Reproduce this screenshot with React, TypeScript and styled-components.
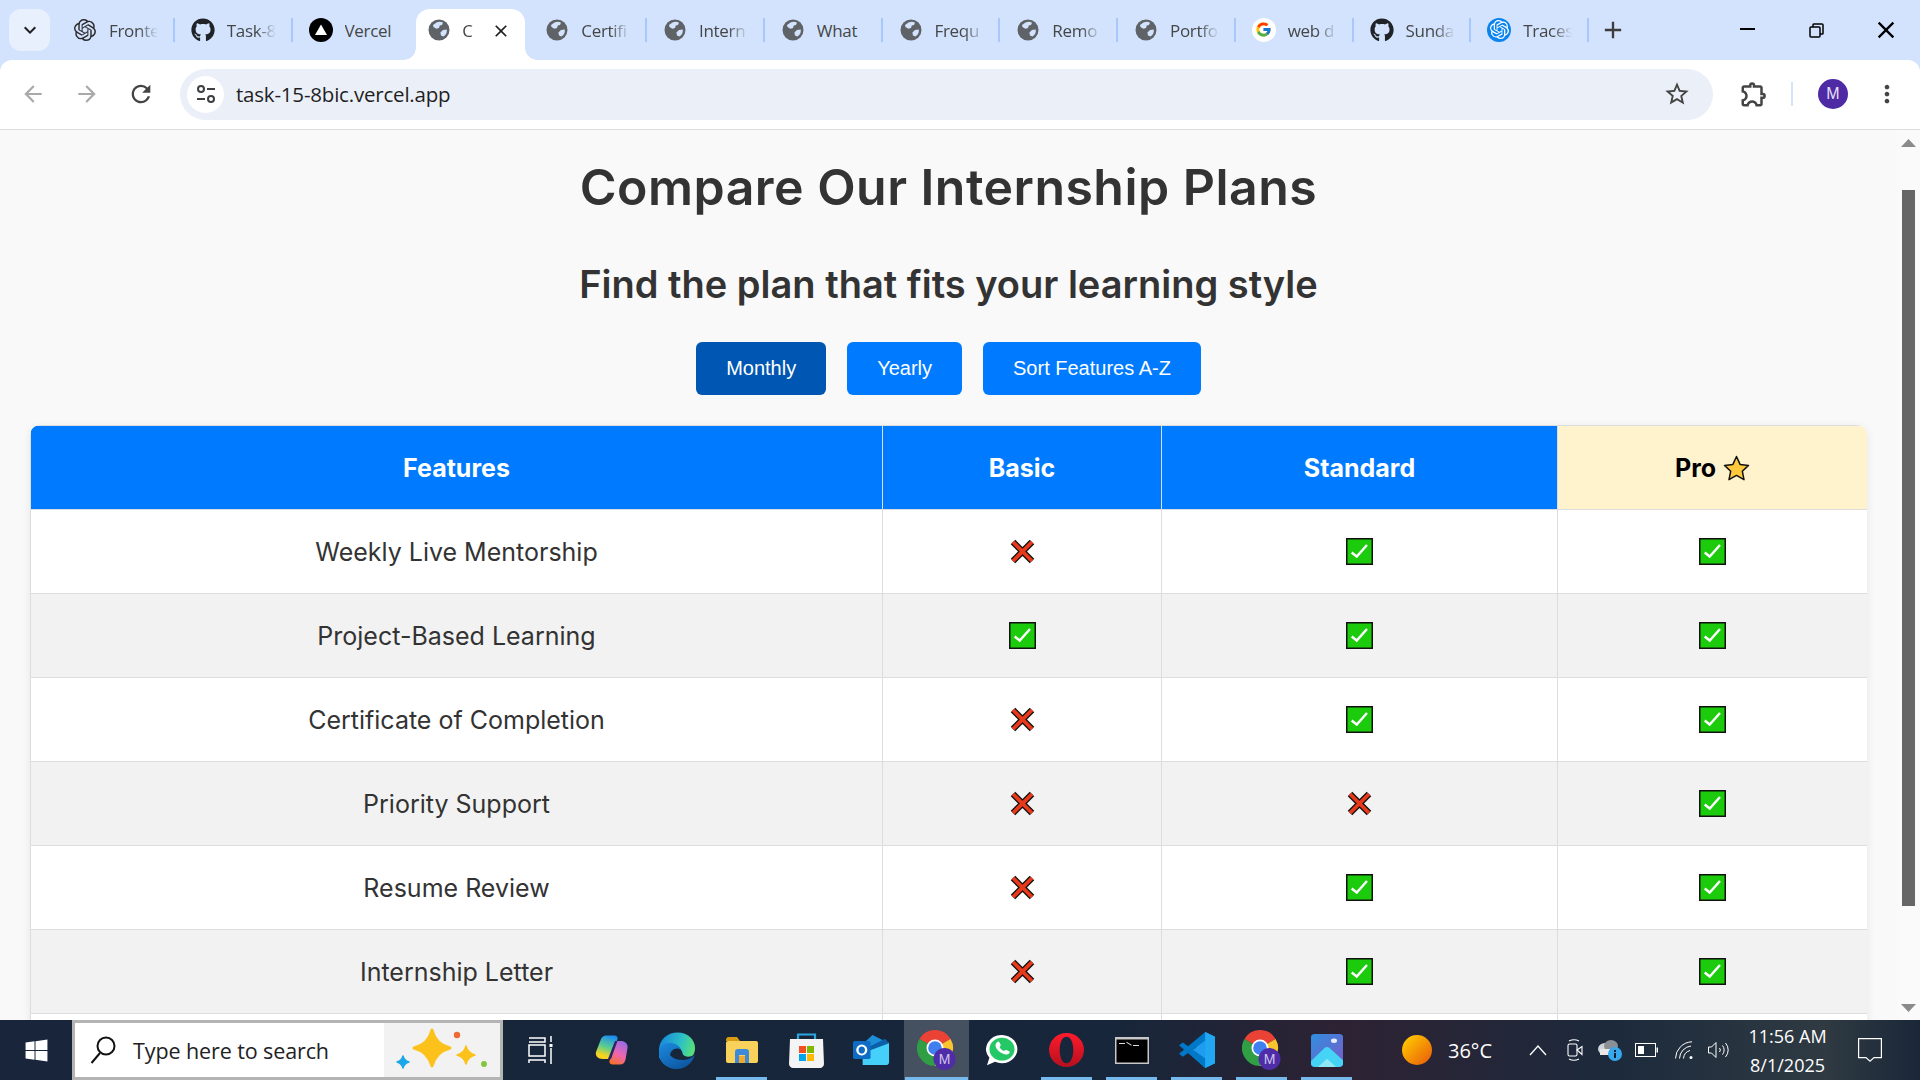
import React from "react";
import styled, { createGlobalStyle } from "styled-components";
import { FaGithub, FaWindows } from "react-icons/fa";
import { FcGoogle } from "react-icons/fc";
import { SiOpenai } from "react-icons/si";
import {
  MdAdd,
  MdArrowBack,
  MdArrowForward,
  MdClose,
  MdKeyboardArrowDown,
  MdMoreVert,
  MdOutlineExtension,
  MdRefresh,
  MdStarBorder,
} from "react-icons/md";

const GlobalStyle = createGlobalStyle`
  html, body {
    margin: 0;
    padding: 0;
    overflow: hidden;
    background: #d3e3fd;
  }
  * { box-sizing: border-box; }
`;

type TabInfo = {
  title: string;
  icon: "openai" | "github" | "vercel" | "globe" | "google" | "traces";
  solid?: boolean;
  noSep?: boolean;
  active?: boolean;
};

const TABS: TabInfo[] = [
  { title: "Fronte", icon: "openai" },
  { title: "Task-8", icon: "github" },
  { title: "Vercel", icon: "vercel", noSep: true, solid: true },
  { title: "C", icon: "globe", active: true, noSep: true },
  { title: "Certifi", icon: "globe" },
  { title: "Intern", icon: "globe" },
  { title: "What", icon: "globe", solid: true },
  { title: "Frequ", icon: "globe" },
  { title: "Remo", icon: "globe" },
  { title: "Portfo", icon: "globe" },
  { title: "web d", icon: "google" },
  { title: "Sunda", icon: "github" },
  { title: "Traces", icon: "traces" },
];

const ROWS: [string, boolean, boolean, boolean][] = [
  ["Weekly Live Mentorship", false, true, true],
  ["Project-Based Learning", true, true, true],
  ["Certificate of Completion", false, true, true],
  ["Priority Support", false, false, true],
  ["Resume Review", false, true, true],
  ["Internship Letter", false, true, true],
];

function GlobeIcon() {
  return (
    <svg width="22" height="22" viewBox="0 0 22 22">
      <circle cx="11" cy="11" r="10.5" fill="#5f6368" />
      <path d="M8.5 3.5c2-1 5-1 6.5.2l-1 2.3-2.2.6-.8 2.4-2.7.8L5.5 8 5 6z" fill="#d3e3fd" />
      <path d="M15 11l3.8-.6c.4 3-1 5.6-3.4 7.2l-2.4-1.2-.6-3z" fill="#d3e3fd" />
    </svg>
  );
}

function TabIcon({ kind }: { kind: TabInfo["icon"] }) {
  if (kind === "openai") return <SiOpenai size={22} color="#2b2b2b" />;
  if (kind === "github") return <FaGithub size={24} color="#1f2328" />;
  if (kind === "globe") return <GlobeIcon />;
  if (kind === "google") return <GoogleBadge><FcGoogle size={17} /></GoogleBadge>;
  if (kind === "vercel")
    return (
      <svg width="24" height="24" viewBox="0 0 24 24">
        <circle cx="12" cy="12" r="12" fill="#000" />
        <path d="M12 6.5l6 10.5H6z" fill="#fff" />
      </svg>
    );
  return <TracesBadge><SiOpenai size={19} color="#fff" /></TracesBadge>;
}

function TuneIcon() {
  return (
    <svg width="22" height="22" viewBox="0 0 22 22" fill="none" stroke="#3c4043" strokeWidth="2">
      <circle cx="6" cy="6" r="3" />
      <path d="M12 6h8M2 16h8" />
      <circle cx="16" cy="16" r="3" />
    </svg>
  );
}

function CheckIcon() {
  return (
    <svg width="27" height="27" viewBox="0 0 27 27">
      <rect x="0.75" y="0.75" width="25.5" height="25.5" fill="#1ccb0b" stroke="#111" strokeWidth="1.5" />
      <path d="M5.7 14.5l5 4L21 7" fill="none" stroke="#fff" strokeWidth="2.4" />
    </svg>
  );
}

function CrossIcon() {
  return (
    <svg width="27" height="27" viewBox="0 0 27 27">
      <path d="M4 4l19 19M23 4L4 23" stroke="#111" strokeWidth="6.4" />
      <path d="M4 4l19 19M23 4L4 23" stroke="#e8391a" strokeWidth="3.8" />
    </svg>
  );
}

function HeaderStar() {
  return (
    <svg width="27" height="26" viewBox="0 0 27 26">
      <path
        d="M13.5 1.5l3.6 7.9 8.4 1-6.2 5.8 1.7 8.5-7.5-4.3L6 24.7l1.7-8.5L1.5 10.4l8.4-1z"
        fill="#ffc83d"
        stroke="#111"
        strokeWidth="1.5"
        strokeLinejoin="round"
      />
    </svg>
  );
}

const sparkle = (cx: number, cy: number, r: number) =>
  `M${cx} ${cy - r}Q${cx + r * 0.2} ${cy - r * 0.2} ${cx + r} ${cy}Q${cx + r * 0.2} ${cy + r * 0.2} ${cx} ${cy + r}Q${cx - r * 0.2} ${cy + r * 0.2} ${cx - r} ${cy}Q${cx - r * 0.2} ${cy - r * 0.2} ${cx} ${cy - r}Z`;

function Sparkles() {
  return (
    <svg width="116" height="54" viewBox="0 0 116 54">
      <path d={sparkle(48, 25, 18)} fill="#fcc21b" stroke="#fcc21b" strokeWidth="3" strokeLinejoin="round" />
      <path d={sparkle(82, 32, 9)} fill="#fcc21b" stroke="#fcc21b" strokeWidth="1.5" strokeLinejoin="round" />
      <path d={sparkle(19, 39, 6)} fill="#1aa7e8" stroke="#1aa7e8" strokeWidth="1.5" strokeLinejoin="round" />
      <circle cx="73" cy="12" r="3.2" fill="#ef6a33" />
      <circle cx="100" cy="41" r="3" fill="#86c440" />
    </svg>
  );
}

function SearchGlass() {
  return (
    <svg width="26" height="30" viewBox="0 0 26 30" fill="none" stroke="#111" strokeWidth="2">
      <circle cx="16" cy="11" r="8.5" />
      <path d="M10 18L1.5 28" />
    </svg>
  );
}

function TaskView() {
  return (
    <svg width="26" height="30" viewBox="0 0 26 30" fill="none" stroke="#fff" strokeWidth="1.5">
      <path d="M1 3h16v4H1M1 10h16v11H1zM1 28v-3h16v3M23 1v6M23 13v16" />
      <rect x="21.5" y="9" width="3" height="3" fill="#fff" stroke="none" />
    </svg>
  );
}

function Copilot() {
  return (
    <svg width="33" height="30" viewBox="0 0 33 30">
      <defs>
        <linearGradient id="cpA" x1="0.6" y1="0" x2="0.3" y2="1">
          <stop offset="0" stopColor="#1d8ff0" />
          <stop offset="0.5" stopColor="#5fcf8a" />
          <stop offset="0.85" stopColor="#f7d31f" />
        </linearGradient>
        <linearGradient id="cpB" x1="0.7" y1="0" x2="0.3" y2="1">
          <stop offset="0" stopColor="#9a6be8" />
          <stop offset="0.55" stopColor="#ee66b0" />
          <stop offset="1" stopColor="#f4702f" />
        </linearGradient>
      </defs>
      <path d="M11 .5h8c2.500 0 4 1.500 3.500 3.500L16 24H7.500C3 24 0 21 1 17L6 4C7 2 9 .5 11 .5z" fill="url(#cpA)" />
      <path d="M26 6h-5l-6.500 20c-.6 2 1 3.500 3 3.500H25c3 0 5-2 5.500-5L32.500 13c.7-4-2.500-7-6.500-7z" fill="url(#cpB)" />
      <path d="M20 6h2.500L16 24h-3z" fill="#2a2466" />
    </svg>
  );
}

function Edge() {
  return (
    <svg width="38" height="37" viewBox="0 0 38 37">
      <defs>
        <linearGradient id="edA" x1="0.1" y1="0.3" x2="1" y2="0.5">
          <stop offset="0" stopColor="#1b8fd8" />
          <stop offset="0.55" stopColor="#2bbfc8" />
          <stop offset="1" stopColor="#58e07a" />
        </linearGradient>
        <linearGradient id="edB" x1="0" y1="0" x2="0.7" y2="1">
          <stop offset="0" stopColor="#1c8be0" />
          <stop offset="1" stopColor="#0d55a0" />
        </linearGradient>
      </defs>
      <path d="M1 18C1 8 9 .5 19.500.5 30 .5 37 8 37 16c0 5-2 8-5 10H1z" fill="url(#edA)" />
      <path d="M1 20C2 13 8 10 14 11c5 .8 9 4 10 9 1 4 4 6 8 5.500 2-.3 4-1.500 5-3.500-2 9-10 15-18 15C9 37 0 30 1 20z" fill="url(#edB)" />
      <path d="M12 23c.5-4 4-7 8-6.500 3 .4 4.500 3 4.500 5.500 2 3.500 8 3.500 12 .8C34 26 30 28 26 28c-6 0-11-1-14-5z" fill="#17263a" />
    </svg>
  );
}

function FolderIcon() {
  return (
    <svg width="32" height="26" viewBox="0 0 32 26">
      <path d="M0 3c0-2 1-3 3-3h8l3 4H0z" fill="#d89b12" />
      <rect y="4" width="32" height="22" rx="2" fill="#f9d25c" />
      <path d="M9 26V15c0-2 1-3 3-3h8c2 0 3 1 3 3v11h-4v-8h-6v8z" fill="#3c8ad8" />
      <rect x="13" y="19" width="6" height="7" fill="#f0a92b" />
    </svg>
  );
}

function StoreIcon() {
  return (
    <svg width="35" height="35" viewBox="0 0 35 35">
      <path d="M9 6V1.500h17V6" fill="none" stroke="#2aa6e0" strokeWidth="2.2" />
      <path d="M1 6h33l1 25c0 2-2 4-4 4H4c-2 0-4-2-4-4z" fill="#f4f4f4" />
      <rect x="10" y="13" width="7" height="7" fill="#f25022" />
      <rect x="18" y="13" width="7" height="7" fill="#7fba00" />
      <rect x="10" y="21" width="7" height="7" fill="#00a4ef" />
      <rect x="18" y="21" width="7" height="7" fill="#ffb900" />
    </svg>
  );
}

function OutlookIcon() {
  return (
    <svg width="37" height="30" viewBox="0 0 38 40" preserveAspectRatio="none">
      <path d="M20 0l17 11v25c0 2-1 4-3 4H10V12z" fill="#1d8fd8" />
      <path d="M10 40V24l27-14v26c0 2-1 4-3 4z" fill="#44d0f8" />
      <path d="M10 20L33 5l4 6-27 13z" fill="#0c5fa8" />
      <rect y="8" width="18" height="24" rx="2" fill="#0f6cc4" />
      <ellipse cx="9" cy="20" rx="4.5" ry="6" fill="none" stroke="#fff" strokeWidth="2.4" />
    </svg>
  );
}

function ChromeBadge() {
  return (
    <svg width="40" height="40" viewBox="0 0 40 40">
      <path d="M18 18L2.400 9A18 18 0 0 1 33.600 9z" fill="#ea4335" />
      <path d="M18 18L33.600 9A18 18 0 0 1 18 36z" fill="#f9c52e" />
      <path d="M18 18L18 36A18 18 0 0 1 2.400 9z" fill="#2f9e44" />
      <circle cx="18" cy="18" r="8.500" fill="#fff" />
      <circle cx="18" cy="18" r="6.800" fill="#3f7ff0" />
      <circle cx="27.500" cy="29" r="11" fill="#4f2ca8" />
      <text x="27.500" y="34" textAnchor="middle" fontFamily="Liberation Sans, sans-serif" fontSize="14" fill="#cfc4ea">
        M
      </text>
    </svg>
  );
}

function WhatsAppIcon() {
  return (
    <svg width="32" height="33" viewBox="0 0 32 36" preserveAspectRatio="none">
      <path d="M16 1a15.500 15.500 0 1 1-7 29.400L1 34l2.400-8A15.500 15.500 0 0 1 16 1z" fill="#fff" />
      <circle cx="16" cy="16.5" r="12.5" fill="#25c866" />
      <path d="M11 9c1-1 2-1 2.400 0l1.200 2.800c.3.700 0 1.200-1 2.300.8 2 2.400 3.600 4.400 4.400 1-1 1.600-1.300 2.300-1l2.800 1.300c1 .4.800 1.500 0 2.400-1.500 1.600-4 1.400-6.500.2-3.500-1.600-6.300-4.600-7-8-.3-1.700.6-3.300 1.400-4.400z" fill="#fff" />
    </svg>
  );
}

function OperaIcon() {
  return (
    <svg width="35" height="34" viewBox="0 0 36 36" preserveAspectRatio="none">
      <defs>
        <linearGradient id="opA" x1="0" y1="0" x2="0" y2="1">
          <stop offset="0" stopColor="#ff1b2d" />
          <stop offset="1" stopColor="#b5101e" />
        </linearGradient>
      </defs>
      <path
        fillRule="evenodd"
        d="M18 0a18 18 0 1 0 0 36a18 18 0 1 0 0-36zM18 4c4.500 0 7 6.500 7 14s-2.500 14-7 14-7-6.500-7-14 2.500-14 7-14z"
        fill="url(#opA)"
      />
    </svg>
  );
}

function TerminalIcon() {
  return (
    <svg width="34" height="27" viewBox="0 0 34 27">
      <rect width="34" height="27" fill="#c8c8c8" />
      <rect x="1.500" y="2.500" width="31" height="23" fill="#000" />
      <path d="M4 6h6v1H4zM12 5l5 3-1 .5-5-3zM18 8h6v1h-6z" fill="#ddd" />
    </svg>
  );
}

function VsCodeIcon() {
  return (
    <svg width="37" height="36" viewBox="0 0 38 38" preserveAspectRatio="none">
      <path d="M28 0l10 5v28l-10 5L10 21l8-4z" fill="#1f9cf0" />
      <path d="M28 0v38L1 14l4-3 23 17V9L5 26l-4-3z" fill="#0078c8" />
      <path d="M28 0l10 5v28l-10 5z" fill="#22a7f2" />
    </svg>
  );
}

function PhotosIcon() {
  return (
    <svg width="32" height="33" viewBox="0 0 32 44" preserveAspectRatio="none">
      <defs>
        <linearGradient id="phA" x1="0" y1="0" x2="1" y2="1">
          <stop offset="0" stopColor="#2f8fe0" />
          <stop offset="1" stopColor="#7a5ac8" />
        </linearGradient>
      </defs>
      <rect width="32" height="44" rx="4" fill="url(#phA)" />
      <circle cx="23" cy="9" r="3" fill="#e8eef8" />
      <path d="M0 36l14-18c1-1 3-1 4 0l14 17v5c0 2-2 4-4 4H4c-2 0-4-2-4-4z" fill="#45d4f5" />
      <path d="M7 44l9-11 9 11z" fill="#8feaf8" />
    </svg>
  );
}

function SunIcon() {
  return (
    <svg width="30" height="30" viewBox="0 0 30 30">
      <defs>
        <linearGradient id="snA" x1="0" y1="0" x2="1" y2="1">
          <stop offset="0.1" stopColor="#ffc800" />
          <stop offset="1" stopColor="#e8560a" />
        </linearGradient>
      </defs>
      <circle cx="15" cy="15" r="15" fill="url(#snA)" />
    </svg>
  );
}

function ChevronTray() {
  return (
    <svg width="18" height="12" viewBox="0 0 18 12" fill="none" stroke="#fff" strokeWidth="1.3">
      <path d="M1 11l8-9 8 9" />
    </svg>
  );
}

function MeetIcon() {
  return (
    <svg width="16" height="22" viewBox="0 0 16 22" fill="none" stroke="#fff" strokeWidth="1.1">
      <rect x="1" y="5" width="9" height="12" rx="1.5" />
      <path d="M10 11l5-3.500v8z" />
      <path d="M2 2c3-1.500 7-1.500 10 0M2 20c3 1.500 7 1.500 10 0" />
    </svg>
  );
}

function CloudInfo() {
  return (
    <svg width="24" height="22" viewBox="0 0 24 22">
      <ellipse cx="7" cy="10" rx="7" ry="6" fill="#d0d4d8" />
      <ellipse cx="13" cy="7" rx="7" ry="6" fill="#8a9096" />
      <rect x="2" y="10" width="14" height="6" fill="#e8e8e8" />
      <circle cx="17" cy="15" r="7" fill="#37a8ec" />
      <rect x="16" y="14" width="2" height="5" fill="#10202e" />
      <rect x="16" y="11" width="2" height="2" fill="#10202e" />
    </svg>
  );
}

function BatteryIcon() {
  return (
    <svg width="23" height="14" viewBox="0 0 23 14">
      <rect x="0.5" y="0.5" width="20" height="13" fill="none" stroke="#fff" />
      <rect x="3" y="3" width="6" height="8" fill="#fff" />
      <rect x="21.5" y="4.5" width="1.5" height="5" fill="#fff" />
    </svg>
  );
}

function WifiIcon() {
  return (
    <svg width="18" height="18" viewBox="0 0 18 18" fill="none" stroke="#fff" strokeWidth="1">
      <path d="M.5 17.500A17 17 0 0 1 17 .8M4.500 17.500A13 13 0 0 1 16 5M8.500 17.500A9 9 0 0 1 15 9.500" />
      <circle cx="16" cy="16.5" r="1.5" fill="#fff" stroke="none" />
    </svg>
  );
}

function SpeakerIcon() {
  return (
    <svg width="21" height="18" viewBox="0 0 21 18" fill="none" stroke="#fff" strokeWidth="1">
      <path d="M.5 6h3L8 1.500v15L3.500 12h-3z" />
      <path d="M11.500 7a3 3 0 0 1 0 4M14.500 4.500a7 7 0 0 1 0 9M17.500 2a10.500 10.500 0 0 1 0 14" />
    </svg>
  );
}

function NoticeIcon() {
  return (
    <svg width="24" height="24" viewBox="0 0 24 24" fill="none" stroke="#fff" strokeWidth="1.2">
      <path d="M.6.6h22.800v19H16l-4 3.600-4-3.600H.6z" />
    </svg>
  );
}

function RestoreIcon() {
  return (
    <svg width="15" height="15" viewBox="0 0 15 15" fill="none" stroke="#000" strokeWidth="1.5">
      <rect x="1" y="4" width="10" height="10" rx="1" />
      <path d="M4 4V1.800C4 1.300 4.300 1 4.800 1H13c.6 0 1 .4 1 1v8.200c0 .5-.3.800-.8.800H11" />
    </svg>
  );
}

function ScrollArrow({ down }: { down?: boolean }) {
  return (
    <svg width="15" height="8" viewBox="0 0 15 8">
      <path d={down ? "M0 0h15L7.500 8z" : "M0 8h15L7.500 0z"} fill="#8a8a8a" />
    </svg>
  );
}

export default function App() {
  return (
    <>
      <GlobalStyle />
      <Screen>
        <TabStrip>
          <TabMenu>
            <MdKeyboardArrowDown size={24} color="#1f1f1f" />
          </TabMenu>
          <TabList>
            {TABS.map((tab) => (
              <Tab key={tab.title} $active={tab.active}>
                <TabFavicon>
                  <TabIcon kind={tab.icon} />
                </TabFavicon>
                <TabTitle $active={tab.active} $solid={tab.solid}>{tab.title}</TabTitle>
                {tab.active && (
                  <TabClose>
                    <MdClose size={20} color="#1f1f1f" />
                  </TabClose>
                )}
                {!tab.noSep && <TabSeparator />}
              </Tab>
            ))}
          </TabList>
          <NewTab>
            <MdAdd size={28} color="#3c3c3c" />
          </NewTab>
          <WindowControls>
            <WindowButton>
              <MinimizeBar />
            </WindowButton>
            <WindowButton>
              <RestoreIcon />
            </WindowButton>
            <WindowButton>
              <MdClose size={28} color="#000" />
            </WindowButton>
          </WindowControls>
        </TabStrip>

        <Toolbar>
          <NavButton $dim>
            <MdArrowBack size={26} />
          </NavButton>
          <NavButton $dim>
            <MdArrowForward size={26} />
          </NavButton>
          <NavButton>
            <MdRefresh size={28} />
          </NavButton>
          <AddressBar>
            <SiteInfo>
              <TuneIcon />
            </SiteInfo>
            <AddressText>task-15-8bic.vercel.app</AddressText>
            <MdStarBorder size={28} color="#444" />
          </AddressBar>
          <ExtensionSlot>
            <MdOutlineExtension size={30} color="#444" />
          </ExtensionSlot>
          <ToolbarDivider />
          <Avatar>M</Avatar>
          <MenuSlot>
            <MdMoreVert size={28} color="#444" />
          </MenuSlot>
        </Toolbar>

        <Viewport>
          <Page>
            <Title>Compare Our Internship Plans</Title>
            <Subtitle>Find the plan that fits your learning style</Subtitle>
            <ButtonRow>
              <PlanButton $active>Monthly</PlanButton>
              <PlanButton>Yearly</PlanButton>
              <PlanButton>Sort Features A-Z</PlanButton>
            </ButtonRow>
            <TableCard>
              <PlanTable>
                <colgroup>
                  <col style={{ width: 852 }} />
                  <col style={{ width: 279 }} />
                  <col style={{ width: 396 }} />
                  <col style={{ width: 310 }} />
                </colgroup>
                <thead>
                  <tr>
                    <HeadCell>Features</HeadCell>
                    <HeadCell>Basic</HeadCell>
                    <HeadCell>Standard</HeadCell>
                    <HeadCell $pro>
                      <ProLabel>
                        Pro <HeaderStar />
                      </ProLabel>
                    </HeadCell>
                  </tr>
                </thead>
                <tbody>
                  {ROWS.map(([name, basic, standard, pro]) => (
                    <Row key={name}>
                      <BodyCell>{name}</BodyCell>
                      {[basic, standard, pro].map((has, i) => (
                        <BodyCell key={i}>
                          <MarkWrap>{has ? <CheckIcon /> : <CrossIcon />}</MarkWrap>
                        </BodyCell>
                      ))}
                    </Row>
                  ))}
                  <Row>
                    <BodyCell />
                    <BodyCell />
                    <BodyCell />
                    <BodyCell />
                  </Row>
                </tbody>
              </PlanTable>
            </TableCard>
          </Page>
          <ScrollTrack>
            <ScrollArrow />
            <ScrollThumb />
            <ScrollArrow down />
          </ScrollTrack>
        </Viewport>

        <Taskbar>
          <StartSlot>
            <FaWindows size={25} color="#fff" />
          </StartSlot>
          <SearchBox>
            <SearchIconWrap>
              <SearchGlass />
            </SearchIconWrap>
            <SearchText>Type here to search</SearchText>
            <SparkleArea>
              <Sparkles />
            </SparkleArea>
          </SearchBox>
          <TaskViewSlot>
            <TaskView />
          </TaskViewSlot>
          <AppSlot><Copilot /></AppSlot>
          <AppSlot><Edge /></AppSlot>
          <AppSlot $open><FolderIcon /></AppSlot>
          <AppSlot><StoreIcon /></AppSlot>
          <AppSlot><OutlookIcon /></AppSlot>
          <AppSlot $open $focused><ChromeBadge /></AppSlot>
          <AppSlot><WhatsAppIcon /></AppSlot>
          <AppSlot $open><OperaIcon /></AppSlot>
          <AppSlot $open><TerminalIcon /></AppSlot>
          <AppSlot $open><VsCodeIcon /></AppSlot>
          <AppSlot $open><ChromeBadge /></AppSlot>
          <AppSlot $open><PhotosIcon /></AppSlot>

          <TrayItem $ml={43}><SunIcon /></TrayItem>
          <Temperature>36°C</Temperature>
          <TrayItem $ml={37}><ChevronTray /></TrayItem>
          <TrayItem $ml={20}><MeetIcon /></TrayItem>
          <TrayItem $ml={15}><CloudInfo /></TrayItem>
          <TrayItem $ml={13}><BatteryIcon /></TrayItem>
          <TrayItem $ml={17}><WifiIcon /></TrayItem>
          <TrayItem $ml={15}><SpeakerIcon /></TrayItem>
          <Clock>
            <span>11:56 AM</span>
            <span>8/1/2025</span>
          </Clock>
          <TrayItem $ml={28}><NoticeIcon /></TrayItem>
        </Taskbar>
      </Screen>
    </>
  );
}

const Screen = styled.div`
  width: 1920px;
  height: 1080px;
  display: flex;
  flex-direction: column;
  overflow: hidden;
  background: #d3e3fd;
`;

const TabStrip = styled.div`
  height: 60px;
  flex: none;
  display: flex;
  padding-left: 9px;
`;

const TabMenu = styled.div`
  width: 41px;
  height: 42px;
  margin: 9px 7px 0 0;
  border-radius: 12px;
  background: #e9f0fd;
  display: flex;
  align-items: center;
  justify-content: center;
`;

const TabList = styled.div`
  display: flex;
  width: 1532px;
  flex: none;
`;

const Tab = styled.div<{ $active?: boolean }>`
  position: relative;
  flex: 1 1 0;
  min-width: 0;
  display: flex;
  align-items: center;
  padding-left: 16px;
  height: 60px;
  ${({ $active }) =>
    $active &&
    `
    flex: none;
    width: 109px;
    height: 51px;
    margin: 9px 4px 0 6px;
    padding: 0 0 8px 11px;
    background: #fff;
    border-radius: 14px 14px 0 0;
    &::before, &::after {
      content: "";
      position: absolute;
      bottom: 0;
      width: 12px;
      height: 12px;
    }
    &::before { left: -12px; background: radial-gradient(circle at 0 0, transparent 11.5px, #fff 12px); }
    &::after { right: -12px; background: radial-gradient(circle at 100% 0, transparent 11.5px, #fff 12px); }
  `}
`;

const TabFavicon = styled.div`
  width: 24px;
  height: 24px;
  flex: none;
  display: flex;
  align-items: center;
  justify-content: center;
  margin-top: -1px;
`;

const TabTitle = styled.div<{ $active?: boolean; $solid?: boolean }>`
  margin-left: ${({ $active }) => ($active ? "11px" : "12px")};
  width: ${({ $active }) => ($active ? "14px" : "49px")};
  overflow: hidden;
  white-space: nowrap;
  font: 17px "Open Sans", sans-serif;
  letter-spacing: -0.3px;
  color: #444746;
  ${({ $solid }) => !$solid && "mask-image: linear-gradient(90deg, #000 60%, transparent 100%);"}
`;

const TabClose = styled.div`
  margin-left: 15px;
  display: flex;
`;

const TabSeparator = styled.div`
  position: absolute;
  right: 0;
  top: 18px;
  width: 2px;
  height: 24px;
  background: #a8c7fa;
`;

const GoogleBadge = styled.div`
  width: 24px;
  height: 24px;
  border-radius: 50%;
  background: #fff;
  display: flex;
  align-items: center;
  justify-content: center;
`;

const TracesBadge = styled.div`
  width: 24px;
  height: 24px;
  border-radius: 50%;
  background: #0a84ee;
  display: flex;
  align-items: center;
  justify-content: center;
`;

const NewTab = styled.div`
  width: 48px;
  height: 60px;
  display: flex;
  align-items: center;
  justify-content: center;
`;

const WindowControls = styled.div`
  margin-left: auto;
  display: flex;
`;

const WindowButton = styled.div`
  width: 69px;
  height: 60px;
  display: flex;
  align-items: center;
  justify-content: center;
`;

const MinimizeBar = styled.div`
  width: 15px;
  height: 2px;
  margin-top: -2px;
  background: #000;
`;

const Toolbar = styled.div`
  height: 70px;
  flex: none;
  display: flex;
  align-items: center;
  padding: 0 0 1px 6px;
  background: #fff;
  border-radius: 12px 12px 0 0;
  border-bottom: 1px solid #dedede;
`;

const NavButton = styled.div<{ $dim?: boolean }>`
  width: 54px;
  display: flex;
  justify-content: center;
  color: ${({ $dim }) => ($dim ? "#a9a9a9" : "#444")};
`;

const AddressBar = styled.div`
  width: 1533px;
  height: 51px;
  margin-left: 12px;
  padding: 0 22px 0 7px;
  display: flex;
  align-items: center;
  border-radius: 26px;
  background: #ebeff8;
`;

const SiteInfo = styled.div`
  width: 37px;
  height: 37px;
  border-radius: 50%;
  background: #fff;
  display: flex;
  align-items: center;
  justify-content: center;
`;

const AddressText = styled.div`
  flex: 1;
  margin-left: 12px;
  font: 20.5px "Open Sans", sans-serif;
  letter-spacing: -0.2px;
  color: #1f1f1f;
`;

const ExtensionSlot = styled.div`
  margin-left: 26px;
  display: flex;
`;

const ToolbarDivider = styled.div`
  width: 2px;
  height: 24px;
  margin-left: 22px;
  background: #d3e3fd;
`;

const Avatar = styled.div`
  width: 30px;
  height: 30px;
  margin-left: 25px;
  border-radius: 50%;
  background: #4e2aa5;
  color: #e8e0f8;
  font: 16px "Liberation Sans", sans-serif;
  display: flex;
  align-items: center;
  justify-content: center;
`;

const MenuSlot = styled.div`
  margin-left: 25px;
  display: flex;
`;

const Viewport = styled.div`
  flex: 1;
  min-height: 0;
  display: flex;
  overflow: hidden;
  background: #f9f9f9;
`;

const Page = styled.main`
  width: 1897px;
  flex: none;
  padding: 21px 30px 0;
  font-family: Inter, sans-serif;
  color: #333;
`;

const Title = styled.h1`
  margin: 0;
  text-align: center;
  font-size: 50px;
  line-height: 72px;
  font-weight: 600;
  letter-spacing: 0.47px;
`;

const Subtitle = styled.h2`
  margin: 34px 0 0;
  text-align: center;
  font-size: 38px;
  line-height: 54px;
  font-weight: 600;
`;

const ButtonRow = styled.div`
  margin-top: 31px;
  display: flex;
  justify-content: center;
  gap: 21px;
`;

const PlanButton = styled.button<{ $active?: boolean }>`
  height: 53px;
  padding: 0 30px;
  border: none;
  border-radius: 6px;
  background: ${({ $active }) => ($active ? "#0056b3" : "#007bff")};
  color: #fff;
  font: 20px "Liberation Sans", sans-serif;
`;

const TableCard = styled.div`
  margin-top: 30px;
  width: 1837px;
  border-radius: 10px;
  overflow: hidden;
  box-shadow: 0 2px 10px rgba(0, 0, 0, 0.08);
`;

const PlanTable = styled.table`
  width: 1837px;
  table-layout: fixed;
  border-collapse: collapse;
  background: #fff;
`;

const HeadCell = styled.th<{ $pro?: boolean }>`
  height: 84px;
  padding: 0;
  border: 1px solid #ddd;
  background: ${({ $pro }) => ($pro ? "#fff3cd" : "#007bff")};
  color: ${({ $pro }) => ($pro ? "#000" : "#fff")};
  font-size: 25px;
  font-weight: 700;
  text-align: center;
`;

const ProLabel = styled.span`
  display: inline-flex;
  align-items: center;
  gap: 7px;
`;

const Row = styled.tr`
  &:nth-child(even) {
    background: #f2f2f2;
  }
`;

const BodyCell = styled.td`
  height: 84px;
  padding: 0;
  border: 1px solid #ddd;
  text-align: center;
  font-size: 25px;
  color: #333;
`;

const MarkWrap = styled.span`
  display: flex;
  justify-content: center;
`;

const ScrollTrack = styled.div`
  flex: 1;
  padding-top: 9px;
  padding-left: 4px;
  display: flex;
  flex-direction: column;
  background: #fafafa;
`;

const ScrollThumb = styled.div`
  width: 13px;
  height: 716px;
  margin: 43px 0 98px 1px;
  background: #666;
`;

const Taskbar = styled.footer`
  height: 60px;
  flex: none;
  display: flex;
  align-items: center;
  background: linear-gradient(90deg, #18253a 0%, #17263a 58%, #2d2233 70%, #1c2a3c 84%, #2f3a42 95%, #1a2738 100%);
  color: #fff;
`;

const StartSlot = styled.div`
  width: 72px;
  height: 60px;
  display: flex;
  align-items: center;
  justify-content: center;
`;

const SearchBox = styled.div`
  width: 431px;
  height: 60px;
  display: flex;
  align-items: center;
  background: #fff;
  border: 3px solid #b4b4b4;
`;

const SearchIconWrap = styled.div`
  margin-left: 15px;
  display: flex;
`;

const SearchText = styled.div`
  margin-left: 17px;
  flex: 1;
  font: 21.5px "Open Sans", sans-serif;
  letter-spacing: -0.1px;
  color: #222;
`;

const SparkleArea = styled.div`
  width: 116px;
  height: 54px;
  background: #f2f2f2;
`;

const TaskViewSlot = styled.div`
  width: 76px;
  display: flex;
  justify-content: center;
`;

const AppSlot = styled.div<{ $open?: boolean; $focused?: boolean }>`
  position: relative;
  width: 65px;
  height: 60px;
  flex: none;
  display: flex;
  align-items: center;
  justify-content: center;
  background: ${({ $focused }) => ($focused ? "rgba(255, 255, 255, 0.2)" : "transparent")};
  ${({ $open, $focused }) =>
    $open &&
    `
    &::after {
      content: "";
      position: absolute;
      bottom: 0;
      left: ${$focused ? "1px" : "7px"};
      right: ${$focused ? "1px" : "7px"};
      height: 3px;
      background: #76b9ed;
    }
  `}
`;

const TrayItem = styled.div<{ $ml: number }>`
  margin-left: ${({ $ml }) => $ml}px;
  flex: none;
  display: flex;
`;

const Temperature = styled.div`
  margin-left: 16px;
  font: 20px "Open Sans", sans-serif;
`;

const Clock = styled.div`
  margin-left: 16px;
  width: 85px;
  display: flex;
  flex-direction: column;
  align-items: center;
  gap: 5px;
  font: 18px/24px "Open Sans", sans-serif;
`;
